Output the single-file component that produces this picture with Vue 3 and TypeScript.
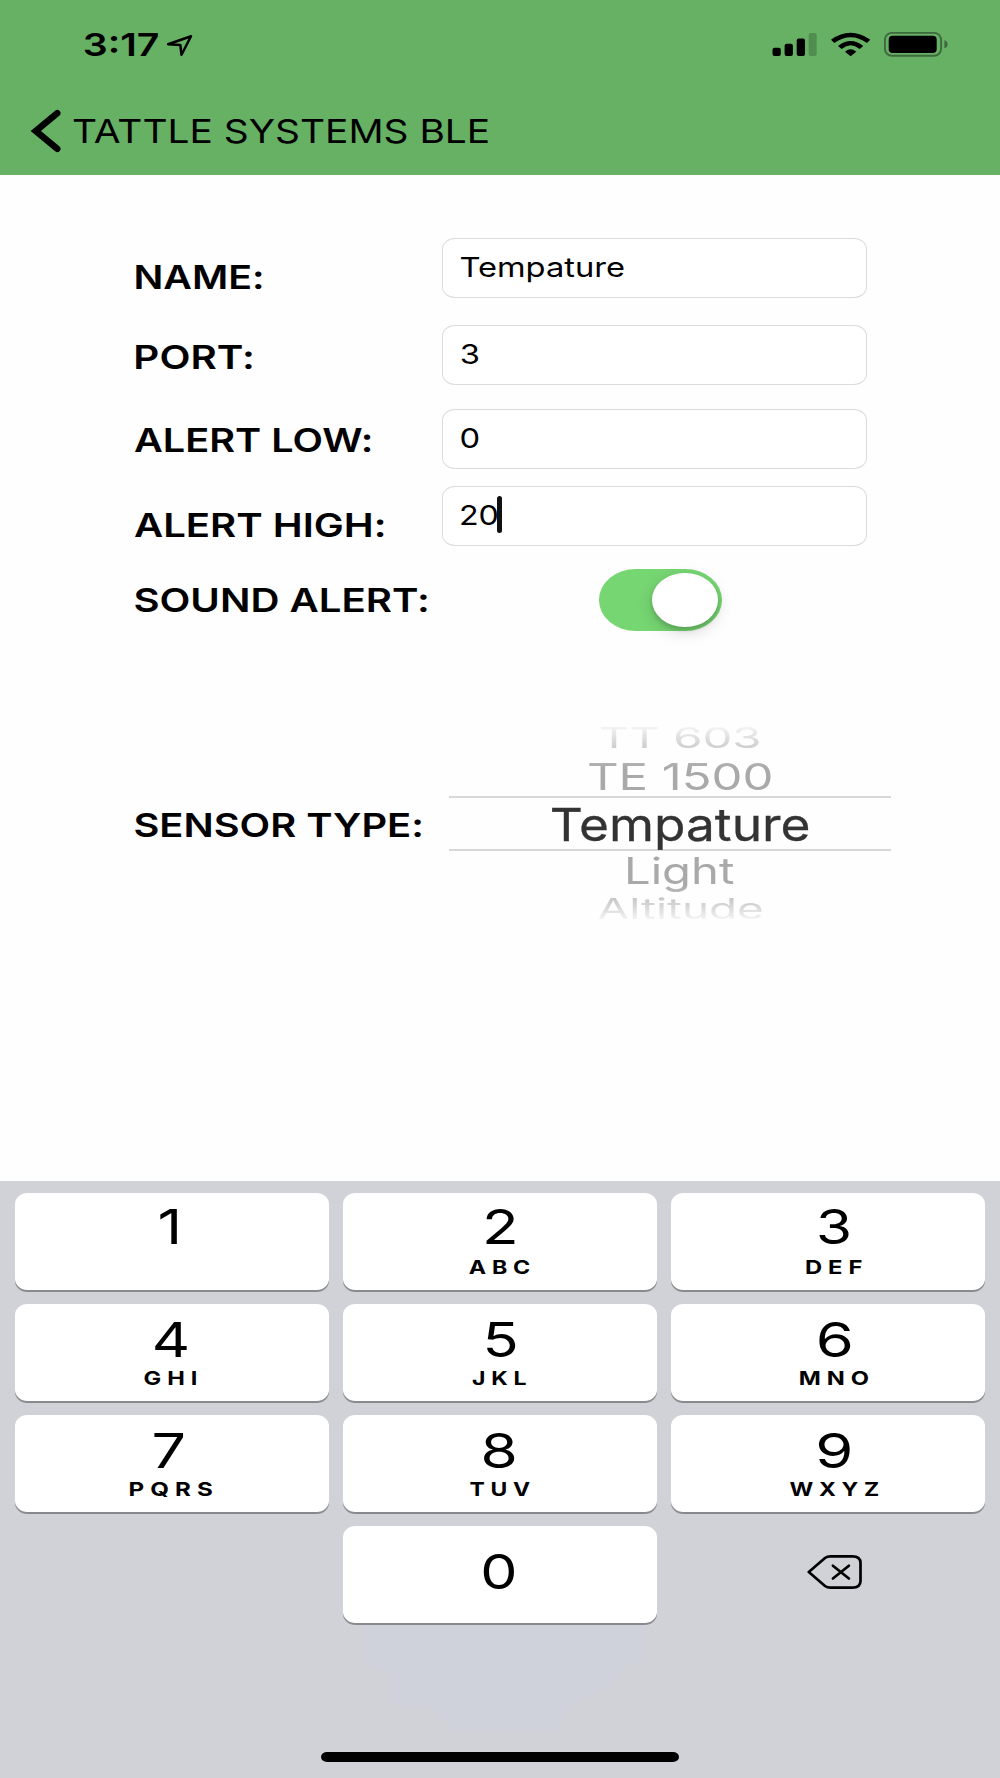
<script setup lang="ts">
import type { Directive } from 'vue'

type Ink = [left: number, width: number]

// Stretches a line of text so that its visible glyphs start at `left` and span `width`.
const vInk: Directive<HTMLElement, Ink> = {
  mounted(el, { value: [left, width] }) {
    const ctx = document.createElement('canvas').getContext('2d')
    if (!ctx) return
    const style = getComputedStyle(el)
    ctx.font = `${style.fontWeight} ${style.fontSize} ${style.fontFamily}`
    if (style.letterSpacing !== 'normal') ctx.letterSpacing = style.letterSpacing
    const m = ctx.measureText(el.textContent ?? '')
    const scale = width / (m.actualBoundingBoxRight + m.actualBoundingBoxLeft)
    const shift = left + m.actualBoundingBoxLeft * scale
    el.style.transform = `translateX(${shift.toFixed(2)}px) scaleX(${scale.toFixed(4)})`
  },
}

interface Field { label: string; labelInk: Ink; value: string; valueInk: Ink; cls: string; focused?: boolean }

const fields: Field[] = [
  { label: 'NAME:', labelInk: [135.8, 125.7], value: 'Tempature', valueInk: [17.6, 163.2], cls: 'name' },
  { label: 'PORT:', labelInk: [135.8, 115.7], value: '3', valueInk: [18, 17.8], cls: 'port' },
  { label: 'ALERT LOW:', labelInk: [134, 236.4], value: '0', valueInk: [17.8, 17.8], cls: 'low' },
  { label: 'ALERT HIGH:', labelInk: [134, 249.4], value: '20', valueInk: [18.3, 36], cls: 'high', focused: true },
]

const options: { text: string; ink: Ink; cls: string }[] = [
  { text: 'TT 603', ink: [151.5, 158.5], cls: 'far-top' },
  { text: 'TE 1500', ink: [139.2, 183.2], cls: 'near-top' },
  { text: 'Tempature', ink: [103, 256.8], cls: 'selected' },
  { text: 'Light', ink: [178.8, 106.4], cls: 'near-bottom' },
  { text: 'Altitude', ink: [148.6, 164], cls: 'far-bottom' },
]

const keys: { digit: string; ink: Ink; letters?: string; lettersInk?: Ink; cls?: string }[] = [
  { digit: '1', ink: [145, 17.7], cls: 'first' },
  { digit: '2', ink: [142.8, 28.8], letters: 'ABC', lettersInk: [125.8, 61.2], cls: 'first' },
  { digit: '3', ink: [147.4, 30.4], letters: 'DEF', lettersInk: [135.2, 55.8], cls: 'first' },
  { digit: '4', ink: [139.2, 33.4], letters: 'GHI', lettersInk: [128.6, 53.2] },
  { digit: '5', ink: [143.2, 29.8], letters: 'JKL', lettersInk: [129, 54.8] },
  { digit: '6', ink: [147.2, 32], letters: 'MNO', lettersInk: [129.1, 68] },
  { digit: '7', ink: [139, 29.2], letters: 'PQRS', lettersInk: [114.8, 82.2] },
  { digit: '8', ink: [140, 31.4], letters: 'TUV', lettersInk: [126.5, 60.3] },
  { digit: '9', ink: [146.7, 32], letters: 'WXYZ', lettersInk: [118.4, 89] },
]
</script>

<template>
  <div class="screen">
    <header class="header">
      <div class="status">
        <span v-ink="[84, 74]" class="time">3:17</span>
        <svg class="location" viewBox="0 0 28 24" width="28" height="24">
          <path d="M3.1 11.2 L26 3.2 L16.5 21.8 L15.3 12 Z" />
        </svg>
        <div class="indicators">
          <svg viewBox="0 0 45 24" width="45" height="24">
            <rect x=".5" y="15.8" width="8.3" height="8.2" rx="2" />
            <rect x="12.6" y="11.8" width="8.3" height="12.2" rx="2" />
            <rect x="24.7" y="6.4" width="8.3" height="17.6" rx="2" />
            <rect x="36.7" y=".9" width="8" height="23.1" rx="2" opacity=".2" />
          </svg>
          <svg viewBox="273 66 118 73" width="39.3" height="24.3" preserveAspectRatio="none">
            <path d="M273 89Q332 48 391 89L381 99Q332 64 283 99Z" />
            <path d="M294 108Q332 78 370 108L359 117Q332 95 305 117Z" />
            <path d="M315 125Q332 111 349 125L332 139Z" />
          </svg>
          <svg viewBox="0 0 64 25" width="64" height="25">
            <rect x=".9" y=".9" width="56.2" height="22.9" rx="7" class="shell" />
            <rect x="4.7" y="3.8" width="48" height="17.2" rx="4" />
            <path d="M60.4 8.3Q63.6 9 63.6 12.2Q63.6 15.5 60.4 16.3Z" opacity=".4" />
          </svg>
        </div>
      </div>
      <div class="nav">
        <svg class="back" viewBox="0 0 32 44" width="32" height="44">
          <path d="M27.2 4.2L5.8 22L27.2 39.8" />
        </svg>
        <span v-ink="[11.2, 414.8]" class="title">TATTLE SYSTEMS BLE</span>
      </div>
    </header>

    <main class="form">
      <div v-for="f in fields" :key="f.label" class="row" :class="f.cls">
        <div class="label-cell"><span v-ink="f.labelInk" class="label">{{ f.label }}</span></div>
        <div class="field">
          <span v-ink="f.valueInk" class="value">{{ f.value }}</span>
          <i v-if="f.focused" class="caret"></i>
        </div>
      </div>
      <div class="row sound">
        <div class="label-cell"><span v-ink="[134.6, 292]" class="label">SOUND ALERT:</span></div>
        <div class="switch"><div class="knob"></div></div>
      </div>
      <div class="row sensor">
        <div class="label-cell"><span v-ink="[134.6, 286.3]" class="label">SENSOR TYPE:</span></div>
        <div class="picker">
          <div v-for="o in options" :key="o.text" class="option" :class="o.cls">
            <span v-ink="o.ink">{{ o.text }}</span>
          </div>
        </div>
      </div>
    </main>

    <section class="keyboard">
      <div class="keys">
        <div v-for="k in keys" :key="k.digit" class="key" :class="k.cls">
          <span v-ink="k.ink" class="digit">{{ k.digit }}</span>
          <span v-if="k.letters && k.lettersInk" v-ink="k.lettersInk" class="letters">{{ k.letters }}</span>
        </div>
        <div></div>
        <div class="key zero"><span v-ink="[139.8, 32]" class="digit">0</span></div>
        <div class="delete">
          <svg viewBox="0 0 56 36" width="56" height="36">
            <path d="M1.8 18L18 4Q20.2 2.3 23.4 2.3H45.3Q53.5 2.3 53.5 9V27Q53.5 33.6 45.3 33.6H23.4Q20.2 33.6 18 32Z" />
            <path d="M25.9 11.7L41.9 24.5M41.9 11.7L25.9 24.5" />
          </svg>
        </div>
      </div>
      <div class="tint"></div>
      <div class="home"></div>
    </section>
  </div>
</template>

<style>
body { margin: 0; background: #fff; }
</style>

<style scoped>
.screen {
  width: 1000px;
  height: 1778px;
  display: flex;
  flex-direction: column;
  overflow: hidden;
  background: #fefefe;
  color: #000;
  font-family: Inter, "Liberation Sans", sans-serif;
}
.screen span {
  display: block;
  width: max-content;
  white-space: nowrap;
  transform-origin: 0 0;
}
.screen svg { display: block; flex: none; }

.header { height: 175px; flex: none; background: #67b165; }
.status { display: flex; height: 90px; }
.time { font-size: 31.5px; font-weight: 600; line-height: 40px; padding-top: 25px; flex: none; }
.status .time { width: 165px; }
.location { margin-top: 32.5px; fill: none; stroke: #000; stroke-width: 2.5; stroke-linejoin: round; }
.indicators { margin-left: auto; padding: 32.4px 52px 0 0; display: flex; align-items: flex-start; gap: 14px; }
.shell { fill: none; stroke: rgba(0, 0, 0, .4); stroke-width: 1.9; }
.nav { display: flex; padding: 19px 0 0 30px; }
.back { fill: none; stroke: #000; stroke-width: 6.6; stroke-linecap: round; stroke-linejoin: miter; }
.title { font-size: 33px; line-height: 44px; }

.form { flex: 1; padding-top: 63px; }
.row { display: flex; align-items: flex-start; }
.label-cell { width: 442px; flex: none; padding-top: 11px; }
.name .label-cell { padding-top: 19px; }
.port .label-cell { padding-top: 12px; }
.high .label-cell { padding-top: 19px; }
.label { font-size: 33px; font-weight: 600; line-height: 40px; font-feature-settings: "calt" 0; }
.name { height: 87px; }
.port { height: 84px; }
.low { height: 77px; }
.high { height: 83.4px; }
.field {
  position: relative;
  box-sizing: border-box;
  width: 425.4px;
  height: 60px;
  border: 1px solid #dcdcdc;
  border-radius: 13px / 11px;
  background: #fff;
}
.value { font-size: 27.6px; line-height: 56px; }
.caret {
  position: absolute;
  left: 54.3px;
  top: 9px;
  width: 5.2px;
  height: 37px;
  border-radius: 2.5px;
  background: #111;
}
.sound { height: 150.6px; }
.switch {
  box-sizing: border-box;
  width: 123px;
  height: 61.5px;
  margin-left: 157px;
  padding: 4px 5px 0 53px;
  border-radius: 37px / 30.75px;
  background: #76d672;
}
.knob {
  width: 65.5px;
  height: 53.5px;
  border-radius: 50%;
  background: #fff;
  box-shadow: 0 5px 16px rgba(0, 0, 0, .16), 0 3px 4px rgba(0, 0, 0, .14);
}
.sensor .label-cell { width: 449px; padding-top: 84.7px; }
.picker {
  width: 442px;
  -webkit-mask-image: linear-gradient(rgba(0,0,0,.1) 6px, #000 48px, #000 165px, rgba(0,0,0,.05) 202px);
  mask-image: linear-gradient(rgba(0,0,0,.1) 6px, #000 48px, #000 165px, rgba(0,0,0,.05) 202px);
}
.option { color: #a9a9a9; }
.option span { position: relative; top: 1px; }
.far-top { font-size: 28.3px; line-height: 35px; }
.near-top { font-size: 37.4px; line-height: 41px; }
.selected { border: solid #d8d8d8; border-width: 2px 0; font-size: 45.5px; line-height: 51px; color: #333; -webkit-text-stroke: .3px #333; }
.near-bottom { font-size: 37px; line-height: 37px; }
.far-bottom { font-size: 28px; line-height: 41px; }

.keyboard {
  display: flex;
  flex-direction: column;
  flex: none;
  height: 597px;
  box-sizing: border-box;
  padding-top: 11.5px;
  background: #d1d2d8;
}
.keys {
  display: grid;
  grid-template-columns: repeat(3, 314px);
  grid-auto-rows: 97px;
  gap: 14.1px 14.3px;
  padding: 0 14.5px;
}
.key {
  box-sizing: border-box;
  padding-top: 16px;
  border-radius: 12.5px / 11px;
  background: #fff;
  box-shadow: 0 2px 0 #898a8e;
}
.digit { font-size: 48px; line-height: 40px; }
.letters { margin-top: 8.4px; font-size: 19.2px; font-weight: 700; line-height: 20px; letter-spacing: 4.8px; }
.first { padding-top: 14px; }
.first .letters { margin-top: 10.2px; }
.zero { padding-top: 26px; }
.delete { padding: 28px 0 0 135.6px; fill: none; stroke: #000; stroke-width: 2.7; stroke-linecap: round; stroke-linejoin: round; }
.tint {
  width: 282px;
  height: 106px;
  margin: 2px 0 0 362px;
  background: #cfd2db;
  clip-path: polygon(0 0, 100% 0, 100% 34%, 93% 40%, 90% 56%, 76% 74%, 68% 100%, 32% 100%, 24% 78%, 10% 76%, 10% 48%, 0 36%);
}
.home { width: 357.5px; height: 10px; margin: 21px 0 0 321px; border-radius: 6px / 5px; background: #000; }
</style>
